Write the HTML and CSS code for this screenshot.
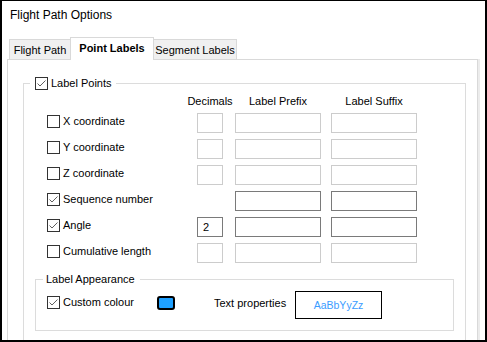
FILE: index.html
```html
<!DOCTYPE html>
<html lang="en">
<head>
    <meta charset="UTF-8">
    <title>Flight Path Options</title>
    <link rel="stylesheet" href="styles.css">
</head>
<body>
    <div class="window">
        <div class="title">Flight Path Options</div>

        <div class="tabs">
            <div class="tab first">Flight Path</div>
            <div class="tab active">Point Labels</div>
            <div class="tab last">Segment Labels</div>
        </div>

        <div class="panel">
            <fieldset class="group points">
                <legend>
                    <svg class="check" viewBox="0 0 13 13"><rect x="0.5" y="0.5" width="12" height="12" fill="#fff" stroke="#333"/><path d="M2.5 6.5 5 9 10.5 3.5" fill="none" stroke="#606060"/></svg>
                    Label Points
                </legend>

                <div class="grid">
                    <div></div>
                    <div class="hd dec">Decimals</div>
                    <div class="hd txt">Label Prefix</div>
                    <div class="hd txt">Label Suffix</div>

                    <div class="row-label">
                        <svg class="check" viewBox="0 0 13 13"><rect x="0.5" y="0.5" width="12" height="12" fill="#fff" stroke="#333"/></svg>
                        X coordinate
                    </div>
                    <input class="box dec" type="text" value="">
                    <input class="box txt" type="text" value="">
                    <input class="box txt" type="text" value="">

                    <div class="row-label">
                        <svg class="check" viewBox="0 0 13 13"><rect x="0.5" y="0.5" width="12" height="12" fill="#fff" stroke="#333"/></svg>
                        Y coordinate
                    </div>
                    <input class="box dec" type="text" value="">
                    <input class="box txt" type="text" value="">
                    <input class="box txt" type="text" value="">

                    <div class="row-label">
                        <svg class="check" viewBox="0 0 13 13"><rect x="0.5" y="0.5" width="12" height="12" fill="#fff" stroke="#333"/></svg>
                        Z coordinate
                    </div>
                    <input class="box dec" type="text" value="">
                    <input class="box txt" type="text" value="">
                    <input class="box txt" type="text" value="">

                    <div class="row-label">
                        <svg class="check" viewBox="0 0 13 13"><rect x="0.5" y="0.5" width="12" height="12" fill="#fff" stroke="#333"/><path d="M2.5 6.5 5 9 10.5 3.5" fill="none" stroke="#606060"/></svg>
                        Sequence number
                    </div>
                    <div></div>
                    <input class="box txt on" type="text" value="">
                    <input class="box txt on" type="text" value="">

                    <div class="row-label">
                        <svg class="check" viewBox="0 0 13 13"><rect x="0.5" y="0.5" width="12" height="12" fill="#fff" stroke="#333"/><path d="M2.5 6.5 5 9 10.5 3.5" fill="none" stroke="#606060"/></svg>
                        Angle
                    </div>
                    <input class="box dec on" type="text" value="2">
                    <input class="box txt on" type="text" value="">
                    <input class="box txt on" type="text" value="">

                    <div class="row-label">
                        <svg class="check" viewBox="0 0 13 13"><rect x="0.5" y="0.5" width="12" height="12" fill="#fff" stroke="#333"/></svg>
                        Cumulative length
                    </div>
                    <input class="box dec" type="text" value="">
                    <input class="box txt" type="text" value="">
                    <input class="box txt" type="text" value="">
                </div>

                <fieldset class="group appearance">
                    <legend>Label Appearance</legend>
                    <div class="appear-row">
                        <div class="chk-label">
                            <svg class="check" viewBox="0 0 13 13"><rect x="0.5" y="0.5" width="12" height="12" fill="#fff" stroke="#333"/><path d="M2.5 6.5 5 9 10.5 3.5" fill="none" stroke="#606060"/></svg>
                            Custom colour
                        </div>
                        <div class="swatch"></div>
                        <div class="text-props">Text properties</div>
                        <div class="sample">AaBbYyZz</div>
                    </div>
                </fieldset>
            </fieldset>
        </div>
    </div>
</body>
</html>
```

FILE: styles.css
```css
body {
    margin: 0;
    font-family: "Liberation Sans", Arial, sans-serif;
    font-size: 11px;
    color: #000;
    background: #fff;
}
.window {
    width: 487px;
    height: 342px;
    box-sizing: border-box;
    border: 2px solid #000;
    border-top-width: 1px;
    overflow: hidden;
    display: flex;
    flex-direction: column;
    background: #fff;
}
.title {
    font-size: 12px;
    line-height: 15px;
    padding: 7px 0 0 8px;
}
.tabs {
    display: flex;
    align-items: flex-end;
    margin: 14px 0 0 7px;
    position: relative;
    z-index: 1;
}
.tab {
    box-sizing: border-box;
    height: 20px;
    margin-bottom: 1px;
    padding-top: 4px;
    line-height: 13px;
    text-align: center;
    white-space: nowrap;
    background: #f0f0f0;
    border: 1px solid #d9d9d9;
    border-bottom: 0;
}
.tab.first {
    width: 61px;
    border-right: 0;
}
.tab.active {
    width: 84px;
    height: 23px;
    margin-bottom: 0;
    background: #fff;
    font-weight: bold;
}
.tab.last {
    width: 83px;
    border-left: 0;
}
.panel {
    flex: 1;
    margin: -1px 7px 0 5px;
    border: 1px solid #d9d9d9;
    border-bottom: 0;
    box-shadow: 2px 0 0 #ececec;
    background: #fff;
}
.group {
    margin: 0;
    padding: 0;
    min-width: 0;
    border: 1px solid #dcdcdc;
}
.points {
    margin: 17px 11px 0 15px;
    padding-bottom: 30px;
    border-bottom: 0;
}
.points > legend {
    display: flex;
    align-items: center;
    margin-left: 6px;
    padding: 0 4px 0 5px;
    line-height: 13px;
    white-space: nowrap;
}
.check {
    display: block;
    flex: none;
    width: 13px;
    height: 13px;
    margin-right: 3px;
}
.grid {
    display: grid;
    grid-template-columns: 150px 38px 96px 86px;
    row-gap: 6px;
    align-items: start;
    margin: 5px 0 0 23px;
}
.hd {
    display: flex;
    justify-content: center;
    white-space: nowrap;
    line-height: 12px;
}
.hd.dec {
    width: 26px;
}
.hd.txt {
    width: 86px;
}
.row-label {
    display: flex;
    align-items: center;
    margin-top: 2px;
    line-height: 13px;
    white-space: nowrap;
}
.box {
    display: block;
    box-sizing: border-box;
    height: 20px;
    margin: 0;
    padding: 0 0 0 5px;
    border: 1px solid #cccccc;
    background: #fff;
    font: inherit;
    color: #000;
    outline: none;
}
.box.dec {
    width: 26px;
}
.box.txt {
    width: 86px;
}
.box.on {
    border-color: #7a7a7a;
}
.appearance {
    margin: 10px 11px 0 11px;
    padding: 5px 0 11px 0;
}
.appearance > legend {
    margin-left: 7px;
    padding: 0 5px 0 3px;
    line-height: 13px;
}
.appear-row {
    display: flex;
    align-items: flex-start;
    height: 28px;
    padding-left: 11px;
}
.chk-label {
    display: flex;
    align-items: center;
    width: 110px;
    margin-top: 5px;
    line-height: 13px;
    white-space: nowrap;
}
.swatch {
    box-sizing: border-box;
    width: 18px;
    height: 14px;
    margin: 5px 39px 0 0;
    border: 2px solid #000;
    border-radius: 3px;
    background: #1ea0ff;
}
.text-props {
    width: 81px;
    margin-top: 6px;
    line-height: 13px;
    white-space: nowrap;
}
.sample {
    box-sizing: border-box;
    width: 87px;
    height: 28px;
    display: flex;
    align-items: center;
    justify-content: center;
    border: 1px solid #000;
    color: #3b9cff;
    font-size: 10.5px;
}
```
